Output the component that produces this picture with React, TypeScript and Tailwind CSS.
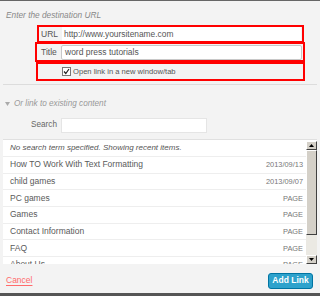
import React from "react";

const rows: [string, string][] = [
  ["How TO Work With Text Formatting", "2013/09/13"],
  ["child games", "2013/09/07"],
  ["PC games", "PAGE"],
  ["Games", "PAGE"],
  ["Contact Information", "PAGE"],
  ["FAQ", "PAGE"],
  ["About Us", "PAGE"],
];

export default function App() {
  return (
    <div
      className="w-[320px] h-[296px] bg-[#f3f3f3] flex flex-col overflow-hidden text-[#555]"
      style={{ fontFamily: '"Liberation Sans", Arial, sans-serif' }}
    >
      <div className="h-[1px] bg-[#666] shrink-0" />
      <div className="h-[24px] shrink-0 pl-[6px] pt-[9px] text-[8.3px] leading-[11px] italic text-[#888]">
        Enter the destination URL
      </div>
      {/* URL */}
      <div className="ml-[37px] w-[267px] h-[18px] border-2 border-[#ff0000] flex items-center shrink-0">
        <span className="w-[23px] pl-[2px] text-[8.5px] text-[#555]">URL</span>
        <div className="flex-1 h-[14px] bg-white flex items-center pl-[2px] text-[8.4px] text-[#555] mr-[1px]">
          http://www.yoursitename.com
        </div>
      </div>
      {/* Title */}
      <div className="ml-[35px] w-[270px] h-[20px] -mt-[1px] border-2 border-[#ff0000] flex items-center shrink-0">
        <span className="w-[24px] pl-[4px] text-[8.5px] text-[#555]">Title</span>
        <div className="flex-1 h-[15px] mr-[1px] bg-white border border-[#c8c8c8] rounded-[2px] flex items-center pl-[3px] text-[8.5px] text-[#555]">
          word press tutorials
        </div>
      </div>
      {/* checkbox */}
      <div className="ml-[36px] w-[269px] h-[19px] border-2 border-[#ff0000] flex items-center shrink-0">
        <div className="ml-[24px] w-[9px] h-[9px] border border-[#777] bg-white flex items-center justify-center">
          <svg width="7" height="7" viewBox="0 0 7 7">
            <path d="M1 3.5 L2.8 5.5 L6 1" stroke="#222" strokeWidth="1.2" fill="none" />
          </svg>
        </div>
        <span className="ml-[2px] text-[7.6px] text-[#555]">Open link in a new window/tab</span>
      </div>
      <div className="mx-[3px] mt-[3px] h-[1px] bg-[#dcdcdc] shrink-0" />
      {/* existing content */}
      <div className="h-[18px] mt-[10px] shrink-0 flex items-center pl-[5px] text-[8.2px] italic text-[#999]">
        <svg width="5" height="4" viewBox="0 0 5 4" className="mr-[4px]">
          <path d="M0 0 L5 0 L2.5 4 Z" fill="#aaa" />
        </svg>
        Or link to existing content
      </div>
      <div className="h-[16px] mt-[4px] shrink-0 flex items-center">
        <span className="ml-[31px] w-[30px] text-[8.2px] text-[#666]">Search</span>
        <div className="w-[146px] h-[15px] bg-white border border-[#e5e5e5]" />
      </div>
      {/* list */}
      <div className="mx-[3px] mt-[6px] h-[125px] shrink-0 bg-white border-t border-[#e0e0e0] flex overflow-hidden">
        <div className="flex-1 flex flex-col">
          <div className="h-[17px] shrink-0 flex items-center pl-[7px] text-[8px] italic text-[#555] border-b border-[#eee]">
            No search term specified. Showing recent items.
          </div>
          {rows.map(([t, d], i) => (
            <div
              key={i}
              className="h-[16.67px] shrink-0 flex items-center justify-between pl-[7px] pr-[3px] text-[8.5px] text-[#5a5a5a] border-b border-[#eee]"
            >
              <span>{t}</span>
              <span className="text-[7.4px] text-[#777]">{d}</span>
            </div>
          ))}
        </div>
        {/* scrollbar */}
        <div className="w-[11px] h-[123px] mt-[1px] flex flex-col bg-[#eeede5]">
          <div className="h-[9px] bg-[#d4d0c8] border border-t-white border-l-white border-r-[#404040] border-b-[#404040] flex items-center justify-center">
            <svg width="5" height="3" viewBox="0 0 5 3"><path d="M0 3 L5 3 L2.5 0 Z" fill="#000" /></svg>
          </div>
          <div className="h-[85px] bg-[#d4d0c8] border border-t-white border-l-white border-r-[#404040] border-b-[#404040]" />
          <div className="flex-1 bg-[#ebe9e3]" />
          <div className="h-[9px] bg-[#d4d0c8] border border-t-white border-l-white border-r-[#404040] border-b-[#404040] flex items-center justify-center">
            <svg width="5" height="3" viewBox="0 0 5 3"><path d="M0 0 L5 0 L2.5 3 Z" fill="#000" /></svg>
          </div>
        </div>
      </div>
      {/* footer */}
      <div className="flex-1 flex items-center justify-between pl-[6px] pr-[7px] pt-[4px]">
        <span className="text-[8.5px] text-[#ff6b6b] underline underline-offset-2 decoration-[#ff6b6b]">Cancel</span>
        <button className="w-[45px] h-[16px] rounded-[3px] bg-[#2ea2cc] border border-[#0074a2] text-white text-[8.5px] font-bold flex items-center justify-center">
          Add Link
        </button>
      </div>
      <div className="h-[3px] bg-[#555] shrink-0" />
    </div>
  );
}
